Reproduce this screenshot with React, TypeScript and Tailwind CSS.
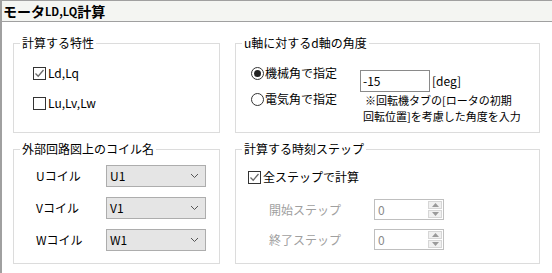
import { ReactNode } from 'react';

const font = { fontFamily: '"Noto Sans CJK JP", "Liberation Sans", sans-serif' };

const Group = ({ title, className, children }: { title: string; className: string; children: ReactNode }) => (
  <div className={`relative border border-[#dcdcdc] ${className}`}>
    <span className="absolute -top-[9px] left-[6px] bg-white px-[2px] text-[12px] leading-[16px] text-black">
      {title}
    </span>
    {children}
  </div>
);

const CheckBox = ({ checked }: { checked?: boolean }) => (
  <span className="flex h-[13px] w-[13px] items-center justify-center border border-[#333333] bg-white">
    {checked && (
      <svg width="11" height="11" viewBox="0 0 11 11">
        <path d="M1.5 5.5 L4.2 8.2 L9.5 2" fill="none" stroke="#6a6a6a" strokeWidth="1.3" />
      </svg>
    )}
  </span>
);

const Radio = ({ checked }: { checked?: boolean }) => (
  <span className="flex h-[13px] w-[13px] items-center justify-center rounded-full border border-[#333333] bg-white">
    {checked && <span className="h-[7px] w-[7px] rounded-full bg-[#222222]" />}
  </span>
);

const Select = ({ value }: { value: string }) => (
  <div className="flex h-[22px] w-[100px] items-center justify-between border border-[#adadad] bg-[#e5e5e5] pl-[3px] pr-[6px] text-[12px]">
    <span>{value}</span>
    <svg width="9" height="6" viewBox="0 0 9 6">
      <path d="M1 1 L4.5 4.5 L8 1" fill="none" stroke="#555555" strokeWidth="1" />
    </svg>
  </div>
);

const Spinner = () => (
  <div className="flex h-[21px] w-[70px] border border-[#bfbfbf] bg-white text-[12px] text-[#8a8a8a]">
    <span className="flex-1 pl-[3px] leading-[19px]">0</span>
    <div className="flex w-[16px] flex-col gap-[1px] p-[1px]">
      {[0, 1].map((i) => (
        <span key={i} className="flex flex-1 items-center justify-center border border-[#d6d6d6] bg-[#f0f0f0]">
          <svg width="7" height="4" viewBox="0 0 7 4">
            <path d={i === 0 ? 'M0 4 L3.5 0 L7 4 Z' : 'M0 0 L3.5 4 L7 0 Z'} fill="#9a9a9a" />
          </svg>
        </span>
      ))}
    </div>
  </div>
);

export default function App() {
  return (
    <div className="h-[273px] w-[552px] overflow-hidden border-l-[2px] border-[#a0a0a0] bg-white text-black" style={font}>
      <div className="flex h-[22px] items-center border-y border-[#a0a0a0] bg-[#f4f5f2] pl-[1px] text-[14px] font-bold">
        モータ<span className="text-[11px]">LD,LQ</span>計算
      </div>

      <div className="grid grid-cols-[207px_305px] gap-x-[15px] gap-y-[16px] pl-[11px] pt-[21px]">
        <Group title="計算する特性" className="h-[90px]">
          <div className="flex flex-col gap-[12px] pl-[19px] pt-[20px] text-[12px]">
            <label className="flex items-center gap-[2px]">
              <CheckBox checked />
              <span>Ld,Lq</span>
            </label>
            <label className="flex items-center gap-[2px]">
              <CheckBox />
              <span>Lu,Lv,Lw</span>
            </label>
          </div>
        </Group>

        <Group title="u軸に対するd軸の角度" className="h-[90px]">
          <div className="flex pl-[15px] pt-[20px] text-[12px]">
            <div className="flex w-[109px] flex-col gap-[8px]">
              <label className="flex items-center gap-[1px]">
                <Radio checked />
                <span>機械角で指定</span>
              </label>
              <label className="flex items-center gap-[1px]">
                <Radio />
                <span>電気角で指定</span>
              </label>
            </div>
            <div className="flex flex-col pt-[6px]">
              <div className="flex items-center gap-[2px]">
                <div className="h-[22px] w-[70px] border border-[#8a8a8a] bg-white pl-[2px] leading-[20px]">-15</div>
                <span>[deg]</span>
              </div>
              <div className="flex flex-col pl-[5px] text-[11px] leading-[16px]">
                <span>※回転機タブの[ロータの初期</span>
                <span className="-ml-[2px]">回転位置]を考慮した角度を入力</span>
              </div>
            </div>
          </div>
        </Group>

        <Group title="外部回路図上のコイル名" className="h-[115px]">
          <div className="flex flex-col gap-[10px] pl-[22px] pt-[15px] text-[12px]">
            {['U', 'V', 'W'].map((c) => (
              <div key={c} className="flex items-center">
                <span className="w-[70px]">{c}コイル</span>
                <Select value={`${c}1`} />
              </div>
            ))}
          </div>
        </Group>

        <Group title="計算する時刻ステップ" className="h-[115px]">
          <div className="flex flex-col pl-[12px] pt-[18px] text-[12px]">
            <label className="flex items-center gap-[2px]">
              <CheckBox checked />
              <span>全ステップで計算</span>
            </label>
            <div className="mt-[13px] flex flex-col gap-[9px] pl-[21px] text-[#a0a0a0]">
              <div className="flex items-center">
                <span className="w-[105px]">開始ステップ</span>
                <Spinner />
              </div>
              <div className="flex items-center">
                <span className="w-[105px]">終了ステップ</span>
                <Spinner />
              </div>
            </div>
          </div>
        </Group>
      </div>
    </div>
  );
}
